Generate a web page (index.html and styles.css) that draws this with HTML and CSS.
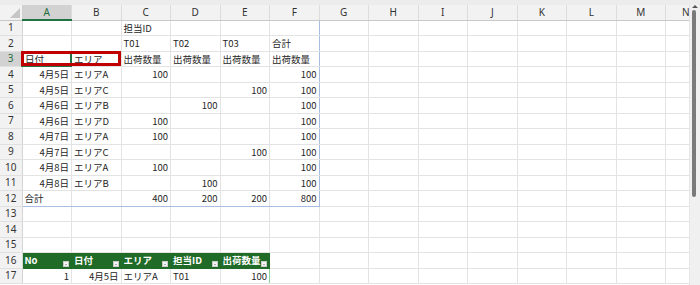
FILE: index.html
```html
<!DOCTYPE html>
<html lang="ja">
<head>
<meta charset="utf-8">
<link rel="stylesheet" href="styles.css">
</head>
<body>
<div class="window">
  <div class="topstrip"></div>
  <div class="main">
    <div class="sheet">
      <table class="grid">
        <colgroup>
          <col class="c-rh"><col class="c"><col class="c"><col class="c"><col class="c"><col class="c"><col class="c"><col class="c"><col class="c"><col class="c"><col class="c"><col class="c"><col class="c"><col class="c"><col class="c-n">
        </colgroup>
        <thead>
          <tr class="colhead">
            <th class="corner"><span class="tri"></span></th>
            <th class="sel">A</th><th>B</th><th>C</th><th>D</th><th>E</th><th>F</th><th>G</th><th>H</th><th>I</th><th>J</th><th>K</th><th>L</th><th>M</th><th class="nclip">N</th>
          </tr>
        </thead>
        <tbody>
          <tr><th>1</th><td></td><td></td><td>担当ID</td><td></td><td></td><td class="pr"></td><td></td><td></td><td></td><td></td><td></td><td></td><td></td><td></td></tr>
          <tr><th>2</th><td></td><td></td><td>T01</td><td>T02</td><td>T03</td><td class="pr">合計</td><td></td><td></td><td></td><td></td><td></td><td></td><td></td><td></td></tr>
          <tr><th class="selrow">3</th><td class="active">日付</td><td>エリア</td><td>出荷数量</td><td>出荷数量</td><td>出荷数量</td><td class="pr">出荷数量</td><td></td><td></td><td></td><td></td><td></td><td></td><td></td><td></td></tr>
          <tr><th>4</th><td class="n">4月5日</td><td>エリアA</td><td class="n">100</td><td></td><td></td><td class="n pr">100</td><td></td><td></td><td></td><td></td><td></td><td></td><td></td><td></td></tr>
          <tr><th>5</th><td class="n">4月5日</td><td>エリアC</td><td></td><td></td><td class="n">100</td><td class="n pr">100</td><td></td><td></td><td></td><td></td><td></td><td></td><td></td><td></td></tr>
          <tr><th>6</th><td class="n">4月6日</td><td>エリアB</td><td></td><td class="n">100</td><td></td><td class="n pr">100</td><td></td><td></td><td></td><td></td><td></td><td></td><td></td><td></td></tr>
          <tr><th>7</th><td class="n">4月6日</td><td>エリアD</td><td class="n">100</td><td></td><td></td><td class="n pr">100</td><td></td><td></td><td></td><td></td><td></td><td></td><td></td><td></td></tr>
          <tr><th>8</th><td class="n">4月7日</td><td>エリアA</td><td class="n">100</td><td></td><td></td><td class="n pr">100</td><td></td><td></td><td></td><td></td><td></td><td></td><td></td><td></td></tr>
          <tr><th>9</th><td class="n">4月7日</td><td>エリアC</td><td></td><td></td><td class="n">100</td><td class="n pr">100</td><td></td><td></td><td></td><td></td><td></td><td></td><td></td><td></td></tr>
          <tr><th>10</th><td class="n">4月8日</td><td>エリアA</td><td class="n">100</td><td></td><td></td><td class="n pr">100</td><td></td><td></td><td></td><td></td><td></td><td></td><td></td><td></td></tr>
          <tr><th>11</th><td class="n">4月8日</td><td>エリアB</td><td></td><td class="n">100</td><td></td><td class="n pr">100</td><td></td><td></td><td></td><td></td><td></td><td></td><td></td><td></td></tr>
          <tr class="pbottom"><th>12</th><td>合計</td><td></td><td class="n">400</td><td class="n">200</td><td class="n">200</td><td class="n pr">800</td><td></td><td></td><td></td><td></td><td></td><td></td><td></td><td></td></tr>
          <tr><th>13</th><td></td><td></td><td></td><td></td><td></td><td></td><td></td><td></td><td></td><td></td><td></td><td></td><td></td><td></td></tr>
          <tr><th>14</th><td></td><td></td><td></td><td></td><td></td><td></td><td></td><td></td><td></td><td></td><td></td><td></td><td></td><td></td></tr>
          <tr><th>15</th><td></td><td></td><td></td><td></td><td></td><td></td><td></td><td></td><td></td><td></td><td></td><td></td><td></td><td></td></tr>
          <tr><th>16</th><td class="th">No<span class="fb"></span></td><td class="th">日付<span class="fb"></span></td><td class="th">エリア<span class="fb"></span></td><td class="th">担当ID<span class="fb"></span></td><td class="th">出荷数量<span class="fb"></span></td><td></td><td></td><td></td><td></td><td></td><td></td><td></td><td></td><td></td></tr>
          <tr><th>17</th><td class="n">1</td><td class="n">4月5日</td><td>エリアA</td><td>T01</td><td class="n tr">100</td><td></td><td></td><td></td><td></td><td></td><td></td><td></td><td></td><td></td></tr>
        </tbody>
      </table>
      <div class="redbox"></div>
    </div>
    <div class="vscroll">
      <span class="arrow"></span>
      <span class="thumb"></span>
    </div>
  </div>
</div>
</body>
</html>
```

FILE: styles.css
```css
html, body {
  margin: 0;
  padding: 0;
  background: #ffffff;
}

.window {
  width: 700px;
  height: 285px;
  overflow: hidden;
  font-family: "Noto Sans CJK JP", "Noto Sans", sans-serif;
  color: #262626;
}

.topstrip {
  height: 5px;
  background: #ececec;
}

.main {
  display: flex;
  height: 280px;
}

.sheet {
  position: relative;
  width: 690px;
  overflow: hidden;
}

.grid {
  table-layout: fixed;
  border-collapse: collapse;
  width: 690px;
  font-size: 9.5px;
  line-height: 13px;
}

.c-rh { width: 22px; }
.c { width: 49.5px; }
.c-n { width: 25px; }

.grid td {
  padding: 1px 2px 0 2px;
  border: 1px solid #e3e3e3;
  border-top: none;
  white-space: nowrap;
  overflow: hidden;
  vertical-align: middle;
}

.grid tbody tr {
  height: 15.5px;
}

.grid tbody th {
  background: #f2f2f2;
  border-right: 1px solid #d4d4d4;
  border-bottom: 1px solid #e0e0e0;
  font-family: "Noto Sans", sans-serif;
  font-weight: normal;
  font-size: 10px;
  line-height: 13px;
  color: #333;
  text-align: center;
  padding: 0;
}

.colhead {
  height: 15px;
}

.colhead th {
  background: #f2f2f2;
  border-left: 1px solid #dcdcdc;
  border-bottom: 1px solid #c8c8c8;
  font-family: "Noto Sans", sans-serif;
  font-weight: normal;
  font-size: 10px;
  line-height: 13px;
  color: #333;
  padding: 0;
  text-align: center;
  overflow: hidden;
}

.colhead th.corner {
  position: relative;
  border-left: none;
  border-right: 1px solid #d0d0d0;
}

.tri {
  position: absolute;
  right: 2px;
  bottom: 2px;
  width: 0;
  height: 0;
  border-left: 10px solid transparent;
  border-bottom: 10px solid #c6c6c6;
}

.colhead th.sel {
  background: #d2d2d2;
  color: #1e6e3c;
  border-bottom: 2px solid #217346;
}

.colhead th.nclip {
  text-align: right;
  padding-right: 1px;
}

.grid tbody th.selrow {
  background: #d2d2d2;
  color: #1e6e3c;
  border-right: 2px solid #217346;
}

.grid td.n {
  text-align: right;
}

.grid td.active {
  outline: 2px solid #217346;
  outline-offset: -2px;
}

.grid td.pr {
  border-right: 1px solid #a9bde3;
}

.pbottom td:nth-of-type(-n+6) {
  border-bottom: 1px solid #a9bde3;
}

.grid td.th {
  position: relative;
  background: #1f6b27;
  color: #ffffff;
  font-weight: bold;
  border-color: #1f6b27;
}

.fb {
  position: absolute;
  right: 2px;
  bottom: 1px;
  width: 6px;
  height: 6px;
  background: #f4f4f4;
  border: 1px solid #c9c9c9;
  box-sizing: border-box;
}

.fb::after {
  content: "";
  position: absolute;
  left: 1px;
  top: 2px;
  border-left: 1px solid transparent;
  border-right: 1px solid transparent;
  border-top: 1px solid #666;
}

.grid td.tr {
  border-right: 1px solid #8fd49a;
}

.redbox {
  position: absolute;
  left: 21px;
  top: 46px;
  width: 100px;
  height: 15px;
  border: 3px solid #c00000;
  box-sizing: border-box;
}

.vscroll {
  position: relative;
  width: 10px;
  background: #f0f0f0;
  border-left: 1px solid #e6e6e6;
}

.arrow {
  position: absolute;
  left: 2px;
  top: 0;
  border-left: 3px solid transparent;
  border-right: 3px solid transparent;
  border-bottom: 3px solid #555;
}

.thumb {
  position: absolute;
  left: 2px;
  top: 5px;
  width: 4px;
  height: 187px;
  background: #7a7a7a;
  border-radius: 2px;
}
```
